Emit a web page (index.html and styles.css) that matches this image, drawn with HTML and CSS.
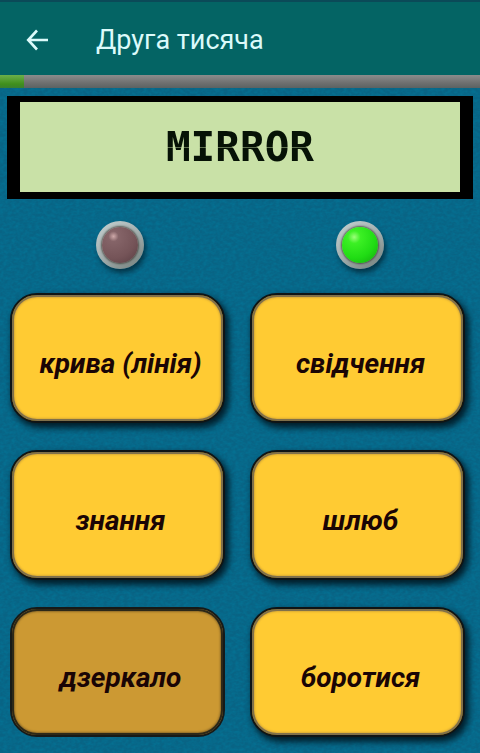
FILE: index.html
```html
<!DOCTYPE html>
<html lang="uk">
<head>
    <meta charset="UTF-8">
    <meta name="viewport" content="width=device-width, initial-scale=1.0">
    <title>Друга тисяча</title>
    <link rel="stylesheet" href="styles.css">
</head>
<body>

    <!-- App bar -->
    <header class="app-bar">
        <a class="back" href="#" aria-label="Назад">
            <svg width="22" height="22" viewBox="0 0 22 22" fill="none" stroke="currentColor" stroke-width="2.6">
                <path d="M22 11H3M11 1.5L2.2 11L11 20.5"/>
            </svg>
        </a>
        <h1>Друга тисяча</h1>
    </header>

    <div class="progress" role="progressbar" aria-label="Прогрес" aria-valuenow="5" aria-valuemin="0" aria-valuemax="100">
        <div class="progress-fill" style="width: 5%"></div>
    </div>

    <main>
        <!-- Word to translate -->
        <div class="display"><span class="word">MIRROR</span></div>

        <!-- Wrong / right lamps -->
        <div class="lamps">
            <span class="lamp lamp-off"></span>
            <span class="lamp lamp-green"></span>
        </div>

        <!-- Answers -->
        <div class="answers">
            <button class="answer">крива (лінія)</button>
            <button class="answer">свідчення</button>
            <button class="answer">знання</button>
            <button class="answer">шлюб</button>
            <button class="answer pressed">дзеркало</button>
            <button class="answer">боротися</button>
        </div>
    </main>

</body>
</html>
```
FILE: styles.css
```css
* {
    box-sizing: border-box;
}

body {
    margin: 0;
    font-family: Roboto, "Liberation Sans", sans-serif;
    background-color: #086485;
    background-image: url("data:image/svg+xml,%3Csvg xmlns='http://www.w3.org/2000/svg' width='200' height='200'%3E%3Cfilter id='n'%3E%3CfeTurbulence type='fractalNoise' baseFrequency='0.25 0.35' numOctaves='2' stitchTiles='stitch'/%3E%3CfeColorMatrix values='0 0 0 0 0 0 0 0 0 0.22 0 0 0 0 0.37 0.8 0 0 0 -0.25'/%3E%3C/filter%3E%3Crect width='200' height='200' filter='url(%23n)'/%3E%3C/svg%3E");
}

/* App bar */
.app-bar {
    display: flex;
    align-items: center;
    height: 75px;
    padding: 2px 26px 0;
    background-color: #046464;
    border-top: 2px solid #0b4a58;
    color: #dcfafa;
}

.back {
    display: flex;
    width: 70px;
    color: inherit;
}

.app-bar h1 {
    margin: 0;
    font-size: 27px;
    font-weight: 400;
    line-height: 32px;
}

/* Progress */
.progress {
    height: 13px;
    background: linear-gradient(#8c8c8c, #6f7070 60%, #5c6262);
}

.progress-fill {
    height: 100%;
    background: linear-gradient(#6cb04a, #3f8f1c 70%, #3a8030);
}

main {
    padding: 8px 0 16px;
}

/* LCD display */
.display {
    display: flex;
    align-items: center;
    justify-content: center;
    height: 103px;
    margin: 0 7px;
    border: solid #000;
    border-width: 6px 13px 7px;
    background-color: #c9e1a7;
    color: #061206;
    font-family: "DejaVu Sans Mono", monospace;
    font-size: 41px;
    font-weight: 700;
    line-height: 48px;
}

/* thin gap between the upper and lower LCD segments */
.word {
    background: linear-gradient(#061206 24px, #5f7050 24px, #5f7050 25px, #061206 25px);
    background-clip: text;
    -webkit-background-clip: text;
    color: transparent;
}

/* Lamps */
.lamps {
    display: grid;
    grid-template-columns: 1fr 1fr;
    justify-items: center;
    padding: 22px 0 24px;
}

.lamp {
    width: 48px;
    height: 48px;
    padding: 6px;
    border-radius: 50%;
    background: linear-gradient(145deg, #c6d2d2, #a3afaf 50%, #717d79);
    box-shadow: 2px 4px 5px rgba(0, 20, 30, 0.6);
}

.lamp::before {
    content: "";
    display: block;
    height: 100%;
    border-radius: 50%;
    box-shadow: 0 0 2px 1px rgba(50, 45, 35, 0.7);
}

.lamp-off::before {
    background: radial-gradient(circle at 32% 26%, #cfaaaa 0, #856468 14%, #755458 60%, #583d42);
}

.lamp-green::before {
    background: radial-gradient(circle at 34% 28%, #9cff7a 0, #3cf024 18%, #20dc14 60%, #12a80c);
}

/* Answer buttons */
.answers {
    display: grid;
    grid-template-columns: 1fr 1fr;
    gap: 27px 25px;
    padding: 0 15px 0 10px;
}

.answer {
    height: 130px;
    padding: 12px 0 0 6px;
    border: 2px solid #101414;
    border-radius: 27px;
    background-color: #ffcb33;
    box-shadow: inset 0 0 0 2px #80704a, inset 0 0 2px 3px #d9ab35, 3px 4px 6px 1px rgba(0, 12, 20, 0.8);
    color: #1a0505;
    font-family: inherit;
    font-size: 28px;
    font-style: italic;
    font-weight: 700;
    line-height: 32px;
    cursor: pointer;
}

.answer.pressed,
.answer:active {
    border-color: #171a18;
    background-color: #cc9933;
    box-shadow: inset 0 0 0 2px #2c2818, inset 0 0 2px 3px #8e6b28;
}
```
